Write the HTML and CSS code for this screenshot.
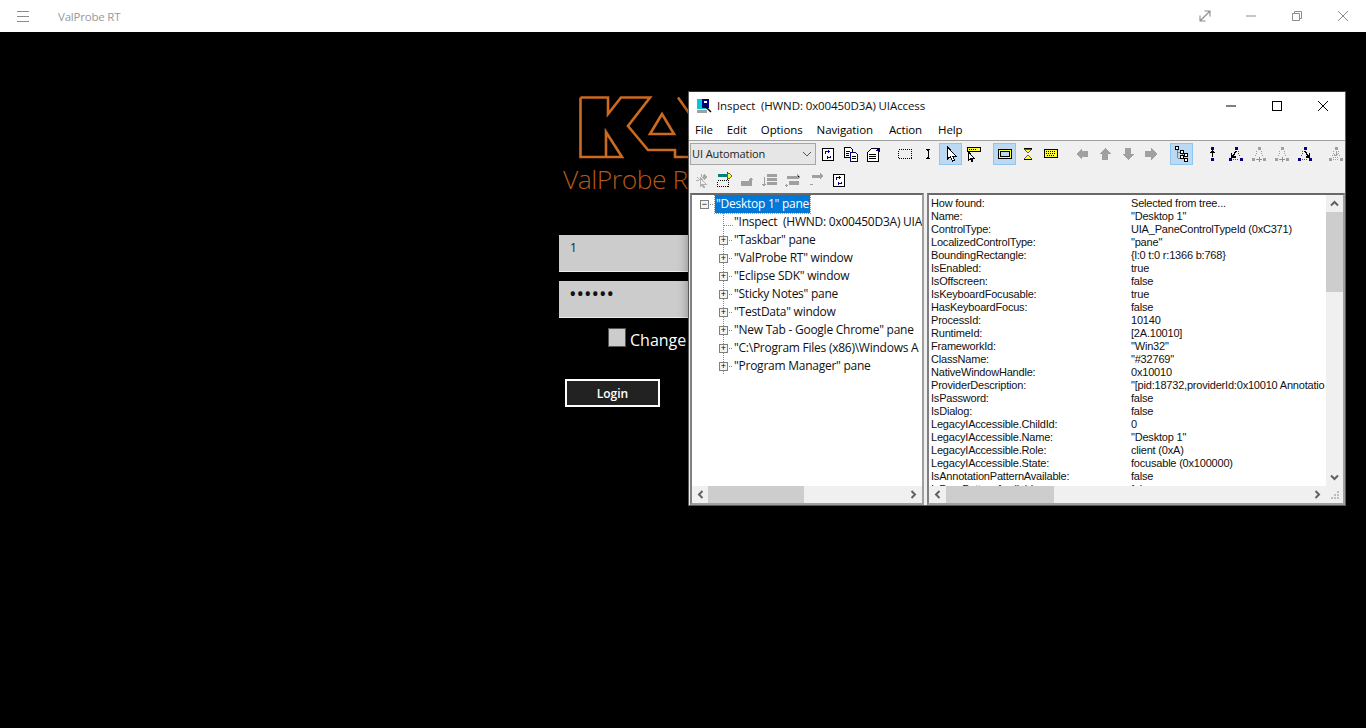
FILE: index.html
```html
<!DOCTYPE html>
<html lang="en">
<head>
    <meta charset="UTF-8">
    <title>ValProbe RT</title>
    <link rel="stylesheet" href="styles.css">
</head>
<body>

    <svg class="defs" width="0" height="0">
        <symbol id="i-refresh" viewBox="0 0 16 16">
            <rect x="2.5" y="2.5" width="11" height="12" fill="#fff" stroke="#000"/>
            <path d="M5.5 7.5v-2h4M8.500 4v3M10.500 9.500v2h-4M7.500 10v3" fill="none" stroke="#000080"/>
        </symbol>
        <symbol id="i-copy" viewBox="0 0 16 16">
            <path d="M1.5 1.5h6l2 2v8h-8z" fill="#fff" stroke="#000"/>
            <path d="M7.5 6.5h5l2 2v7h-7z" fill="#fff" stroke="#000080"/>
            <path d="M3 5h4M3 7h3M3 9h3M9 10h4M9 12h4" stroke="#000"/>
        </symbol>
        <symbol id="i-props" viewBox="0 0 16 16">
            <path d="M1.5 6.5l4-4h7v13h-11z" fill="#fff" stroke="#000"/>
            <path d="M3 8h7M3 10h7M3 12h7" stroke="#000"/>
            <path d="M9 5l5-3v4z" fill="#000080"/>
        </symbol>
        <symbol id="i-rect" viewBox="0 0 16 16">
            <rect x="1.5" y="3.500" width="13" height="9" fill="none" stroke="#000" stroke-dasharray="1 1"/>
        </symbol>
        <symbol id="i-ibeam" viewBox="0 0 16 16">
            <path d="M6 3.500h1.500l.5 1 .5-1H10M8 4v8M6 12.500h1.500l.5-1 .5 1H10" fill="none" stroke="#000"/>
        </symbol>
        <symbol id="i-cursor" viewBox="0 0 16 16">
            <path d="M4.5 1v12l3-2.500 2 4.500 2-1-2-4h3.500z" fill="#fff" stroke="#000"/>
        </symbol>
        <symbol id="i-hover" viewBox="0 0 16 16">
            <rect x="1.5" y="1.500" width="13" height="4" fill="#ffff33" stroke="#000"/>
            <path d="M3 3.500h8" stroke="#000" stroke-dasharray="1 1"/>
            <path d="M2.500 6v8l2-1.500 1.500 3 1-.5-1.500-3h2.500z" fill="#fff" stroke="#000"/>
        </symbol>
        <symbol id="i-frame" viewBox="0 0 16 16">
            <rect x="1.5" y="3.500" width="13" height="9" fill="none" stroke="#000"/>
            <rect x="2.5" y="4.500" width="11" height="7" fill="none" stroke="#ffff33"/>
            <rect x="3.5" y="5.500" width="9" height="5" fill="#b9d7f0" stroke="#000"/>
        </symbol>
        <symbol id="i-hourglass" viewBox="0 0 16 16">
            <path d="M4 2.500h8M4 13.500h8" stroke="#000"/>
            <path d="M4.500 3h7L8 7z M8 9l3.500 4h-7z" fill="#ffff33" stroke="#000" stroke-width=".6"/>
        </symbol>
        <symbol id="i-keys" viewBox="0 0 16 16">
            <rect x="1.5" y="3.500" width="13" height="8" fill="#ffff33" stroke="#000"/>
            <path d="M3 5.500h10M3 7.500h10M4 9.500h8" stroke="#000" stroke-dasharray="1 1"/>
        </symbol>
        <symbol id="i-left" viewBox="0 0 16 16"><path d="M2 8l6-6v3h6v6H8v3z" fill="#a0a0a0"/></symbol>
        <symbol id="i-up" viewBox="0 0 16 16"><path d="M8 2l6 6h-3v6H5V8H2z" fill="#a0a0a0"/></symbol>
        <symbol id="i-down" viewBox="0 0 16 16"><path d="M8 14l6-6h-3V2H5v6H2z" fill="#a0a0a0"/></symbol>
        <symbol id="i-right" viewBox="0 0 16 16"><path d="M14 8L8 2v3H2v6h6v3z" fill="#a0a0a0"/></symbol>
        <symbol id="i-tree" viewBox="0 0 16 16">
            <path d="M3.500 3v9M3.500 6h4M3.500 12h4M8 8v2" stroke="#808080" fill="none"/>
            <path d="M1.500 .5h3v3h-3zM6.500 4.500h3v3h-3zM10.500 7.500h3v3h-3zM6.500 9.500h3v3h-3zM10.500 12.500h3v3h-3z" fill="#fff" stroke="#000"/>
        </symbol>
        <symbol id="i-parent" viewBox="0 0 16 16">
            <path d="M6 1h3v3H6zM6 12h3v3H6z" fill="#000080"/>
            <path d="M7.500 5v6M5.500 7l2-2 2 2" fill="none" stroke="#000" stroke-width="1.300"/>
        </symbol>
        <symbol id="i-child" viewBox="0 0 16 16">
            <path d="M6.500 1h3v3h-3zM1 12h3v3H1zM12 12h3v3h-3z" fill="#000080"/>
            <path d="M5 13.500h6M10 5l2 6" stroke="#555" stroke-dasharray="1 1"/>
            <path d="M8 5l-3 5M3.500 7v4h4" fill="none" stroke="#000" stroke-width="1.500"/>
        </symbol>
        <symbol id="i-next" viewBox="0 0 16 16">
            <path d="M6.500 1h3v3h-3zM1 12h3v3H1zM12 12h3v3h-3z" fill="#a0a0a0"/>
            <path d="M5 13.500h6M6 5l-2 6M10 5l2 6" stroke="#a0a0a0" stroke-dasharray="1 1"/>
            <path d="M6 13.500h5M8.500 11v5" stroke="#909090" stroke-width="1.300"/>
        </symbol>
        <symbol id="i-last" viewBox="0 0 16 16">
            <path d="M6.500 1h3v3h-3zM1 12h3v3H1zM12 12h3v3h-3z" fill="#000080"/>
            <path d="M5 13.500h6M6 5l-2 6" stroke="#555" stroke-dasharray="1 1"/>
            <path d="M8 5l3 5M12.500 7v4h-4" fill="none" stroke="#000" stroke-width="1.500"/>
        </symbol>
        <symbol id="i-all" viewBox="0 0 16 16">
            <path d="M6.500 1h3v3h-3zM1 12h3v3H1zM12 12h3v3h-3z" fill="#a0a0a0"/>
            <path d="M5 13.500h6M5 11.500h6M6 9.500h4M6 5l-2 6M10 5l2 6" stroke="#a0a0a0" stroke-dasharray="1 1"/>
            <path d="M8 5v5M6 8l2 2 2-2" fill="none" stroke="#a0a0a0"/>
        </symbol>
        <symbol id="i-focus" viewBox="0 0 16 16">
            <path d="M7 8L4 5M8 2v3M3 8h3" stroke="#b0b0b0"/>
            <path d="M7 5.500v9l2-2 1.500 3 1-.5-1.500-3h3z" fill="none" stroke="#b0b0b0"/>
            <path d="M11 2l3 3-3 3-2-2z" fill="#a8a8a8"/>
        </symbol>
        <symbol id="i-mark" viewBox="0 0 16 16">
            <path d="M2 3h9" stroke="#008080" stroke-width="3"/>
            <path d="M11 0l5 4-5 4z" fill="#ffff33" stroke="#000" stroke-width=".6"/>
            <rect x="1.5" y="8.500" width="11" height="6" fill="none" stroke="#000" stroke-dasharray="1 1"/>
        </symbol>
        <symbol id="i-g1" viewBox="0 0 16 16"><path d="M2 9h11v5H2z" fill="#a0a0a0"/><path d="M9 8l3-3 2 3-3 1z" fill="#a0a0a0"/></symbol>
        <symbol id="i-g2" viewBox="0 0 16 16"><path d="M5 2h10v3H5zM5 6h10v3H5zM5 10h10v3H5z" fill="#a0a0a0"/><path d="M2 5v9M.5 12L2 14l1.500-2" fill="none" stroke="#a0a0a0"/></symbol>
        <symbol id="i-g3" viewBox="0 0 16 16"><path d="M4 9h10v4H4zM2 4h10v3H2z" fill="#a0a0a0"/><path d="M12 2l3 3-3 2zM0 13h3M1.500 11.500v3" stroke="#a0a0a0"/></symbol>
        <symbol id="i-g4" viewBox="0 0 16 16"><path d="M4 3h8v3H4z" fill="#a0a0a0"/><path d="M12 1l3 3-3 3zM2 12h3" fill="#a0a0a0" stroke="#a0a0a0"/></symbol>
        <symbol id="c-left" viewBox="0 0 9 9"><path d="M6.500 1L3 4.500 6.500 8" fill="none" stroke="#606060" stroke-width="2"/></symbol>
        <symbol id="c-right" viewBox="0 0 9 9"><path d="M2.500 1L6 4.500 2.500 8" fill="none" stroke="#606060" stroke-width="2"/></symbol>
        <symbol id="c-up" viewBox="0 0 9 9"><path d="M1 6.500L4.500 3 8 6.500" fill="none" stroke="#606060" stroke-width="2"/></symbol>
        <symbol id="c-down" viewBox="0 0 9 9"><path d="M1 2.500L4.500 6 8 2.500" fill="none" stroke="#606060" stroke-width="2"/></symbol>
    </svg>

    <!-- App title bar -->
    <header class="appbar">
        <div class="appbar-left">
            <span class="hamburger"><i></i><i></i><i></i></span>
            <span class="app-name">ValProbe RT</span>
        </div>
        <div class="appbar-right">
            <svg class="win-ico" viewBox="0 0 12 12"><path d="M1 11L11 1M5.500 1H11v5.500M1 5.500V11h5.500" fill="none" stroke="#8c8c8c" stroke-width="1.100"/></svg>
            <svg class="win-ico" viewBox="0 0 12 12"><path d="M1 6h10" stroke="#8c8c8c"/></svg>
            <svg class="win-ico" viewBox="0 0 12 12"><path d="M1.500 3.500h7v7h-7zM3.500 3.500v-2h7v7h-2" fill="none" stroke="#8c8c8c"/></svg>
            <svg class="win-ico" viewBox="0 0 12 12"><path d="M1 1l10 10M11 1L1 11" stroke="#8c8c8c"/></svg>
        </div>
    </header>

    <!-- Login -->
    <main class="login">
        <svg class="logo" viewBox="0 0 110 64" width="110" height="64">
            <path d="M1.500 2.500H29V19L42 2.500H71L49 31L69 55H96V62H110" fill="none" stroke="#cc6a1f" stroke-width="2.600"/>
            <path d="M1.500 2.500V62H43L27 37V62" fill="none" stroke="#cc6a1f" stroke-width="2.600"/>
            <path d="M83 19L71 39H95z" fill="none" stroke="#cc6a1f" stroke-width="2.600"/>
            <path d="M99 2.500L110 18" fill="none" stroke="#cc6a1f" stroke-width="2.600"/>
        </svg>
        <div class="product">ValProbe RT</div>
        <div class="field">1</div>
        <div class="field field-pass">&#8226;&#8226;&#8226;&#8226;&#8226;&#8226;</div>
        <label class="change"><span class="check"></span>Change Password</label>
        <button class="login-btn">Login</button>
    </main>

    <!-- Inspect tool window -->
    <section class="inspect">
        <div class="titlebar">
            <svg class="title-ico" viewBox="0 0 16 16">
                <rect x="1" y="1" width="11" height="10" fill="#00c8d8"/>
                <rect x="6" y="1" width="7" height="9" fill="#000080"/>
                <rect x="8" y="3" width="3" height="2" fill="#fff"/>
                <rect x="1" y="12" width="10" height="3" fill="#a0a0a0"/>
                <path d="M9 8l6 6" stroke="#000" stroke-width="1.500"/>
            </svg>
            <span class="title-text">Inspect&nbsp; (HWND: 0x00450D3A) UIAccess</span>
            <div class="title-btns">
                <svg class="caption-ico" viewBox="0 0 12 12"><path d="M1 6h10" stroke="#000"/></svg>
                <svg class="caption-ico" viewBox="0 0 12 12"><rect x="1.500" y="1.500" width="9" height="9" fill="none" stroke="#000"/></svg>
                <svg class="caption-ico" viewBox="0 0 12 12"><path d="M1 1l10 10M11 1L1 11" stroke="#000"/></svg>
            </div>
        </div>
        <nav class="menu">
            <span>File</span><span>Edit</span><span>Options</span><span>Navigation</span><span class="menu-action">Action</span><span>Help</span>
        </nav>
        <div class="toolbar">
            <div class="combo">UI Automation
                <svg class="combo-arrow" viewBox="0 0 10 6"><path d="M1 1l4 4 4-4" fill="none" stroke="#555"/></svg>
            </div>
            <div class="tool-group">
                <span class="tool"><svg><use href="#i-refresh"/></svg></span>
                <span class="tool"><svg><use href="#i-copy"/></svg></span>
                <span class="tool"><svg><use href="#i-props"/></svg></span>
            </div>
            <div class="tool-group">
                <span class="tool"><svg><use href="#i-rect"/></svg></span>
                <span class="tool"><svg><use href="#i-ibeam"/></svg></span>
                <span class="tool active"><svg><use href="#i-cursor"/></svg></span>
                <span class="tool"><svg><use href="#i-hover"/></svg></span>
            </div>
            <div class="tool-group">
                <span class="tool active"><svg><use href="#i-frame"/></svg></span>
                <span class="tool"><svg><use href="#i-hourglass"/></svg></span>
                <span class="tool"><svg><use href="#i-keys"/></svg></span>
            </div>
            <div class="tool-group">
                <span class="tool"><svg><use href="#i-left"/></svg></span>
                <span class="tool"><svg><use href="#i-up"/></svg></span>
                <span class="tool"><svg><use href="#i-down"/></svg></span>
                <span class="tool"><svg><use href="#i-right"/></svg></span>
            </div>
            <div class="tool-group">
                <span class="tool active"><svg><use href="#i-tree"/></svg></span>
            </div>
            <div class="tool-group">
                <span class="tool"><svg><use href="#i-parent"/></svg></span>
                <span class="tool"><svg><use href="#i-child"/></svg></span>
                <span class="tool"><svg><use href="#i-next"/></svg></span>
                <span class="tool"><svg><use href="#i-next"/></svg></span>
                <span class="tool"><svg><use href="#i-last"/></svg></span>
            </div>
            <div class="tool-group">
                <span class="tool"><svg><use href="#i-all"/></svg></span>
            </div>
        </div>
        <div class="toolbar toolbar-2">
            <span class="tool"><svg><use href="#i-focus"/></svg></span>
            <span class="tool"><svg><use href="#i-mark"/></svg></span>
            <span class="tool"><svg><use href="#i-g1"/></svg></span>
            <span class="tool"><svg><use href="#i-g2"/></svg></span>
            <span class="tool"><svg><use href="#i-g3"/></svg></span>
            <span class="tool"><svg><use href="#i-g4"/></svg></span>
            <span class="tool"><svg><use href="#i-refresh"/></svg></span>
        </div>

        <div class="panes">
            <div class="pane pane-tree">
                <div class="pane-body">
                    <ul class="tree">
                        <li class="root"><span class="box">&minus;</span><span class="sel">"Desktop 1" pane</span></li>
                        <li><span class="nobox"></span>"Inspect&nbsp; (HWND: 0x00450D3A) UIA</li>
                        <li><span class="box">+</span>"Taskbar" pane</li>
                        <li><span class="box">+</span>"ValProbe RT" window</li>
                        <li><span class="box">+</span>"Eclipse SDK" window</li>
                        <li><span class="box">+</span>"Sticky Notes" pane</li>
                        <li><span class="box">+</span>"TestData" window</li>
                        <li><span class="box">+</span>"New Tab - Google Chrome" pane</li>
                        <li><span class="box">+</span>"C:\Program Files (x86)\Windows A</li>
                        <li><span class="box">+</span>"Program Manager" pane</li>
                    </ul>
                </div>
                <div class="hbar">
                    <span class="arrow"><svg><use href="#c-left"/></svg></span>
                    <div class="track"><div class="thumb thumb-tree"></div></div>
                    <span class="arrow"><svg><use href="#c-right"/></svg></span>
                </div>
            </div>

            <div class="pane pane-details">
                <div class="details-wrap">
                    <div class="pane-body">
                        <div class="details">
                            <div class="row"><b>How found:</b><span>Selected from tree...</span></div>
                            <div class="row"><b>Name:</b><span>"Desktop 1"</span></div>
                            <div class="row"><b>ControlType:</b><span>UIA_PaneControlTypeId (0xC371)</span></div>
                            <div class="row"><b>LocalizedControlType:</b><span>"pane"</span></div>
                            <div class="row"><b>BoundingRectangle:</b><span>{l:0 t:0 r:1366 b:768}</span></div>
                            <div class="row"><b>IsEnabled:</b><span>true</span></div>
                            <div class="row"><b>IsOffscreen:</b><span>false</span></div>
                            <div class="row"><b>IsKeyboardFocusable:</b><span>true</span></div>
                            <div class="row"><b>HasKeyboardFocus:</b><span>false</span></div>
                            <div class="row"><b>ProcessId:</b><span>10140</span></div>
                            <div class="row"><b>RuntimeId:</b><span>[2A.10010]</span></div>
                            <div class="row"><b>FrameworkId:</b><span>"Win32"</span></div>
                            <div class="row"><b>ClassName:</b><span>"#32769"</span></div>
                            <div class="row"><b>NativeWindowHandle:</b><span>0x10010</span></div>
                            <div class="row"><b>ProviderDescription:</b><span>"[pid:18732,providerId:0x10010 Annotatio</span></div>
                            <div class="row"><b>IsPassword:</b><span>false</span></div>
                            <div class="row"><b>IsDialog:</b><span>false</span></div>
                            <div class="row"><b>LegacyIAccessible.ChildId:</b><span>0</span></div>
                            <div class="row"><b>LegacyIAccessible.Name:</b><span>"Desktop 1"</span></div>
                            <div class="row"><b>LegacyIAccessible.Role:</b><span>client (0xA)</span></div>
                            <div class="row"><b>LegacyIAccessible.State:</b><span>focusable (0x100000)</span></div>
                            <div class="row"><b>IsAnnotationPatternAvailable:</b><span>false</span></div>
                            <div class="row"><b>IsDragPatternAvailable:</b><span>false</span></div>
                        </div>
                    </div>
                    <div class="vbar">
                        <span class="arrow"><svg><use href="#c-up"/></svg></span>
                        <div class="vtrack"><div class="vthumb"></div></div>
                        <span class="arrow"><svg><use href="#c-down"/></svg></span>
                    </div>
                </div>
                <div class="hbar">
                    <span class="arrow"><svg><use href="#c-left"/></svg></span>
                    <div class="track"><div class="thumb thumb-details"></div></div>
                    <span class="arrow"><svg><use href="#c-right"/></svg></span>
                    <span class="grip">
                        <svg viewBox="0 0 17 17"><path d="M11 5h2v2h-2zM8 8h2v2H8zM11 8h2v2h-2zM5 11h2v2H5zM8 11h2v2H8zM11 11h2v2h-2z" fill="#bdbdbd"/></svg>
                    </span>
                </div>
            </div>
        </div>
    </section>

</body>
</html>
```

FILE: styles.css
```css
* {
    box-sizing: border-box;
}

html, body {
    height: 100%;
}

body {
    margin: 0;
    background: #000;
    font-family: "Open Sans", sans-serif;
    overflow: hidden;
    position: relative;
}

.defs {
    position: absolute;
}

/* app bar */
.appbar {
    height: 32px;
    background: #fff;
    display: flex;
    justify-content: space-between;
    align-items: center;
}

.appbar-left {
    display: flex;
    align-items: center;
}

.hamburger {
    display: flex;
    flex-direction: column;
    gap: 4px;
    width: 12px;
    margin-left: 17px;
}

.hamburger i {
    display: block;
    height: 1px;
    background: #8c8c8c;
}

.app-name {
    margin-left: 29px;
    font-size: 11.5px;
    letter-spacing: -0.2px;
    color: #999;
}

.appbar-right {
    display: flex;
    align-items: center;
    gap: 34px;
    margin-right: 17px;
}

.win-ico {
    width: 12px;
    height: 12px;
}

/* login */
.login {
    width: 300px;
    margin-left: 559px;
    padding-top: 63px;
}

.logo {
    display: block;
    margin-left: 20px;
}

.product {
    margin: 2px 0 0 4px;
    font-size: 26.5px;
    font-weight: 300;
    letter-spacing: -0.5px;
    line-height: 36px;
    color: #b4561a;
    white-space: nowrap;
}

.field {
    height: 37px;
    background: #cccccc;
    border-bottom: 1px solid #eee;
    padding: 4px 0 0 11px;
    font-size: 12px;
    line-height: 18px;
    color: #222;
}

.product + .field {
    margin-top: 38px;
}

.field-pass {
    margin-top: 9px;
    padding: 3px 0 0 10px;
    font-size: 20px;
    line-height: 20px;
    color: #111;
}

.change {
    display: flex;
    align-items: flex-start;
    margin: 10px 0 0 49px;
    color: #fff;
    font-size: 16px;
    line-height: 24px;
    white-space: nowrap;
}

.check {
    width: 18px;
    height: 19px;
    margin-right: 4px;
    background: #ccc;
    border: 1px solid #555;
}

.login-btn {
    display: block;
    width: 95px;
    height: 28px;
    margin: 27px 0 0 6px;
    background: #222;
    border: 2px solid #fff;
    color: #fff;
    font-family: inherit;
    font-weight: 600;
    font-size: 12px;
    padding: 0;
}

/* inspect window */
.inspect {
    position: absolute;
    left: 688px;
    top: 91px;
    width: 658px;
    height: 415px;
    background: #f0f0f0;
    border: 1px solid #5a5a5a;
    border-top-color: #333;
    box-shadow: 0 0 10px rgba(0,0,0,0.35);
    color: #000;
    display: flex;
    flex-direction: column;
}

.titlebar {
    height: 27px;
    background: #fff;
    display: flex;
    align-items: center;
    padding-left: 7px;
    font-size: 11.5px;
    letter-spacing: -0.1px;
}

.title-ico {
    width: 16px;
    height: 16px;
    margin-right: 5px;
}

.title-text {
    color: #111;
    flex: 1;
}

.title-btns {
    display: flex;
    gap: 34px;
    margin-right: 16px;
}

.caption-ico {
    width: 12px;
    height: 12px;
}

.menu {
    height: 22px;
    background: #fff;
    display: flex;
    gap: 14px;
    padding: 1px 0 0 6px;
    font-size: 11.5px;
    letter-spacing: -0.1px;
    line-height: 20px;
    border-bottom: 1px solid #a0a0a0;
}

.menu-action {
    margin: 0 2px;
}

.toolbar {
    display: flex;
    height: 27px;
    padding: 2px 0 0 1px;
    background: #f0f0f0;
    overflow: hidden;
}

.toolbar-2 {
    padding: 1px 0 0 0;
    height: 25px;
}

.combo {
    width: 126px;
    height: 22px;
    flex: none;
    border: 1px solid #a5a5a5;
    background: #e6e6e6;
    font-size: 11px;
    letter-spacing: -0.1px;
    line-height: 20px;
    padding-left: 1px;
    position: relative;
    color: #222;
}

.combo-arrow {
    position: absolute;
    right: 3px;
    top: 7px;
    width: 10px;
    height: 6px;
}

.tool-group {
    display: flex;
    flex: none;
    margin-right: 8px;
}

.tool {
    width: 23px;
    height: 22px;
    flex: none;
    display: flex;
    align-items: center;
    justify-content: center;
    border: 1px solid transparent;
}

.tool svg {
    width: 16px;
    height: 16px;
    shape-rendering: crispEdges;
}

.tool.active {
    background: #bbd9f3;
    border-color: #90c5ee;
}

/* panes */
.panes {
    flex: 1;
    display: flex;
    gap: 3px;
    padding: 0 0 0 1px;
    min-height: 0;
}

.pane {
    display: flex;
    flex-direction: column;
    border: 2px solid #a0a0a0;
    border-top-color: #696969;
    border-left-color: #808080;
    background: #fff;
    overflow: hidden;
}

.pane-tree {
    width: 234px;
}

.pane-details {
    flex: 1;
}

.pane-body {
    flex: 1;
    overflow: hidden;
    min-height: 0;
    min-width: 0;
}

.tree {
    list-style: none;
    margin: 0;
    padding: 0 0 0 8px;
    font-size: 12px;
    letter-spacing: -0.25px;
    line-height: 18px;
    white-space: nowrap;
    color: #111;
}

.tree li {
    display: flex;
    align-items: center;
    height: 18px;
    padding-left: 19px;
    background-image: linear-gradient(#888 50%, transparent 50%);
    background-size: 1px 2px;
    background-repeat: repeat-y;
    background-position: 23px 0;
}

.tree li.root {
    padding-left: 0;
    background: none;
}

.sel {
    background: #0078d7;
    color: #fff;
    padding: 0 1px;
    outline: 1px dotted #d58a20;
}

.box {
    width: 9px;
    height: 9px;
    flex: none;
    border: 1px solid #808080;
    background: #f4f4f4;
    font-size: 9px;
    line-height: 7px;
    letter-spacing: 0;
    text-align: center;
    color: #000;
    font-family: "Liberation Sans", sans-serif;
    margin-right: 6px;
    position: relative;
}

.nobox {
    width: 9px;
    margin-right: 6px;
    flex: none;
    position: relative;
}

.box::after, .nobox::after {
    content: "";
    position: absolute;
    left: 100%;
    top: 3px;
    width: 5px;
    border-top: 1px dotted #888;
}

.nobox::after {
    left: 5px;
    width: 9px;
}

.details-wrap {
    flex: 1;
    display: flex;
    min-height: 0;
}

.details {
    padding: 2px 0 0 2px;
    font-family: "Liberation Sans", sans-serif;
    font-size: 11px;
    line-height: 13px;
    white-space: nowrap;
    color: #111;
    letter-spacing: -0.2px;
}

.row {
    display: flex;
}

.row b {
    font-weight: normal;
    width: 200px;
    flex: none;
}

.vbar {
    width: 17px;
    flex: none;
    background: #f0f0f0;
    display: flex;
    flex-direction: column;
}

.vtrack {
    flex: 1;
}

.vthumb {
    height: 80px;
    background: #cdcdcd;
}

.arrow {
    display: flex;
    align-items: center;
    justify-content: center;
    height: 17px;
    width: 17px;
    flex: none;
}

.arrow svg {
    width: 9px;
    height: 9px;
}

.hbar {
    height: 17px;
    flex: none;
    display: flex;
    background: #f0f0f0;
}

.track {
    flex: 1;
}

.thumb {
    height: 100%;
    background: #cdcdcd;
}

.thumb-tree {
    width: 96px;
    margin-left: -1px;
}

.thumb-details {
    width: 108px;
}

.grip {
    width: 17px;
    height: 17px;
    flex: none;
}

.grip svg {
    display: block;
    width: 17px;
    height: 17px;
}
```
